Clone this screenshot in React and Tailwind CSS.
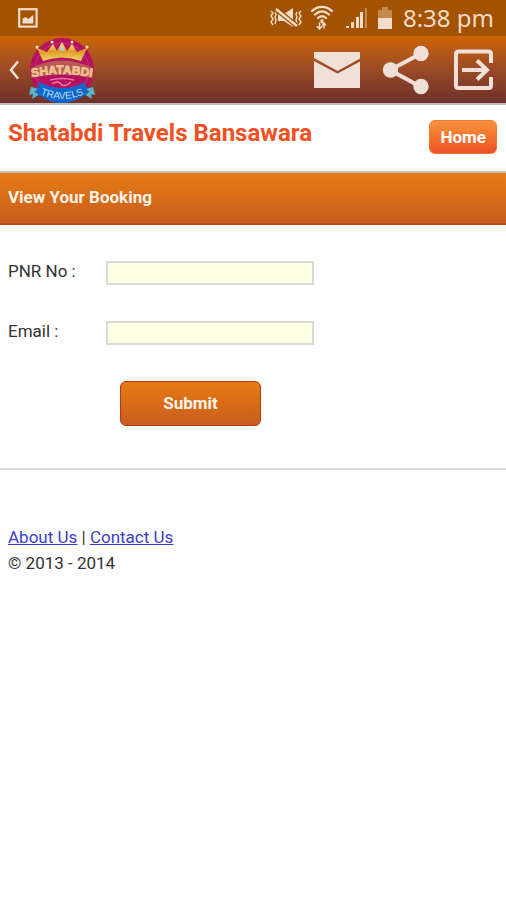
import { useState } from "react";

const FIELDS = [
    { id: "pnr", label: "PNR No :", type: "text" },
    { id: "email", label: "Email :", type: "email" },
];

function StatusBar() {
    return (
        <div className="flex h-9 items-center justify-between bg-[#a35200] pl-[18px] pr-3 text-[#f3dccb]">
            <svg className="h-5 w-5" viewBox="0 0 20 20" fill="none">
                <rect x="1.2" y="1.2" width="17.4" height="17.4" stroke="currentColor" strokeWidth="2.2" />
                <path d="M4.5 15.5v-5l3-1.6 3 2.2 4.8-4.3v8.7z" fill="currentColor" />
            </svg>

            <div className="flex items-center">
                {/* Vibrate / muted */}
                <svg className="mr-2 h-[22px] w-[34px]" viewBox="0 0 34 22" fill="none" stroke="currentColor">
                    <path d="M2 4l2 2-2 3 2 3-2 3 2 3M6 5l1 2-1 3 1 3-1 4M32 4l-2 2 2 3-2 3 2 3-2 3M28 5l-1 2 1 3-1 3 1 4" strokeWidth="1.4" />
                    <path d="M9 7h6l9-6v19l-9-6H9z" fill="currentColor" stroke="none" />
                    <path d="M7 2l21 17" stroke="#a35200" strokeWidth="5" />
                    <path d="M7 2l21 17" strokeWidth="2.4" />
                </svg>
                {/* Wifi */}
                <svg className="mr-3 h-[26px] w-[22px]" viewBox="0 0 22 26" fill="none" stroke="currentColor" strokeLinecap="round">
                    <path d="M1 6c6-5.5 14-5.5 20 0M4 9.5c4.500-4 9.500-4 14 0M7 13c2.600-2.300 5.400-2.300 8 0" strokeWidth="2.3" />
                    <path d="M11 15.500v1.500" strokeWidth="3" />
                    <path d="M8.500 18v6M6.200 21.500l2.300 2.700 2.200-2.700M13 23v-4M11.500 20l1.500-2 1.500 2" strokeWidth="1.5" />
                </svg>
                {/* Signal */}
                <svg className="mr-2 h-[22px] w-6" viewBox="0 0 24 22" fill="currentColor">
                    <path d="M1 19h3v2H1zM6 15h3v6H6zM11 10h3v11h-3zM15 5h3v16h-3z" />
                    <path d="M20 1h2v20h-2z" opacity="0.4" />
                </svg>
                {/* Battery */}
                <svg className="mr-2.5 h-[22px] w-4" viewBox="0 0 16 22" fill="currentColor">
                    <path d="M5 0h6v3h4v9H1V3h4z" opacity="0.4" />
                    <path d="M1 11h14v11H1z" />
                </svg>
                <span className="font-['Noto_Sans',sans-serif] text-2xl leading-9">8:38 pm</span>
            </div>
        </div>
    );
}

function Logo() {
    return (
        <svg className="h-[67px] w-[68px]" viewBox="0 0 68 67" role="img" aria-label="Shatabdi Travels">
            <defs>
                <linearGradient id="gold" x1="0" x2="0" y1="0" y2="1">
                    <stop offset="0" stopColor="#fff0a0" />
                    <stop offset="0.5" stopColor="#dd9c22" />
                    <stop offset="1" stopColor="#f5d668" />
                </linearGradient>
                <path id="nameLine" d="M1 42Q34 34 67 42" />
                <path id="ribbonLine" d="M9 57Q34 69 59 57" />
            </defs>
            <circle cx="34" cy="34" r="32" fill="#b5125f" />
            <circle cx="34" cy="34" r="27" fill="none" stroke="#d83a80" strokeWidth="1" opacity="0.7" />
            <path d="M9 12l10 4 6-8 4 7 5-9 5 9 5-7 5 8 10-4-6 13Q34 18 15 25z" fill="url(#gold)" />
            <g fill="#ffe9a2">
                <circle cx="9" cy="11" r="1.5" />
                <circle cx="24" cy="6" r="1.5" />
                <circle cx="44" cy="6" r="1.5" />
                <circle cx="59" cy="11" r="1.5" />
            </g>
            <circle cx="34" cy="13" r="2" fill="#a9d5dd" />
            <path d="M3 32Q34 17 65 32v10Q34 35 3 42z" fill="#b95a55" />
            <text className="font-['Liberation_Sans',sans-serif] text-[12px] font-bold" fill="#eab964" stroke="#ffe0c0" strokeWidth="0.5">
                <textPath href="#nameLine" startOffset="50%" textAnchor="middle">SHATABDI</textPath>
            </text>
            <path d="M22 44q12-3 24 0M24 48q6-4 9 0t10-2" fill="none" stroke="#ee7ba9" strokeWidth="1.4" />
            <path d="M3 51l8 2-5 3 6 2-8 5 1-5-4 1zM65 51l-8 2 5 3-6 2 8 5-1-5 4 1z" fill="#54b8ce" />
            <path d="M11 46Q34 58 57 46l3 11Q34 77 8 57z" fill="#1267cc" />
            <text className="font-['Liberation_Sans',sans-serif] text-[10px]" fill="#b4dcff">
                <textPath href="#ribbonLine" startOffset="50%" textAnchor="middle">TRAVELS</textPath>
            </text>
        </svg>
    );
}

function AppBar() {
    return (
        <header className="flex h-[67px] items-center justify-between bg-gradient-to-b from-[#cc6500] to-[#6d302b] pl-2 pr-3 text-[#f0e1d8]">
            <div className="flex items-center gap-2">
                <button type="button" aria-label="Back" className="flex h-12 w-3 items-center justify-center">
                    <svg className="h-5 w-3" viewBox="0 0 12 20" fill="none" stroke="currentColor" strokeWidth="2.5">
                        <path d="M10 1.500L3 10l7 8.500" />
                    </svg>
                </button>
                <Logo />
            </div>

            <nav className="flex items-center gap-[22px]">
                <button type="button" aria-label="Mail">
                    <svg className="h-[50px] w-12" viewBox="0 0 48 50" fill="currentColor">
                        <path d="M2 7h47v6L25.500 26 2 13z" />
                        <path d="M2 16l23.500 12.500L49 16v27H2z" />
                    </svg>
                </button>
                <button type="button" aria-label="Share">
                    <svg className="h-[50px] w-12" viewBox="0 0 48 50" fill="currentColor">
                        <path d="M39 8.500L8 25l31 17" fill="none" stroke="currentColor" strokeWidth="4" />
                        <circle cx="39" cy="8.500" r="7.700" />
                        <circle cx="8.500" cy="25" r="7.700" />
                        <circle cx="39" cy="41.500" r="7.700" />
                    </svg>
                </button>
                <button type="button" aria-label="Exit">
                    <svg className="h-[50px] w-[42px]" viewBox="0 0 42 50" fill="none" stroke="currentColor">
                        <path d="M39 18V9q0-2.500-2.500-2.500H6.500Q4 6.500 4 9v31.500q0 2.500 2.500 2.500h30q2.500 0 2.500-2.500V32" strokeWidth="4" />
                        <path d="M10 25h25M25 15.500L35 25l-10 9.500" strokeWidth="4" />
                    </svg>
                </button>
            </nav>
        </header>
    );
}

export default function App() {
    const [values, setValues] = useState({ pnr: "", email: "" });

    const handleChange = (e) => {
        setValues((prev) => ({ ...prev, [e.target.id]: e.target.value }));
    };

    return (
        <div className="min-h-screen bg-white font-[Roboto,sans-serif] text-[17px] text-[#333333]">
            <StatusBar />
            <AppBar />

            <main>
                {/* Agency name */}
                <div className="flex h-[70px] items-start justify-between border-y-2 border-t-[#c5bcbc] border-b-[#c9bdb5] pl-2 pr-[9px] pt-[15px]">
                    <h1 className="text-2xl leading-[26px] font-bold text-[#f15022]">Shatabdi Travels Bansawara</h1>
                    <a
                        href="#home"
                        className="rounded-md border border-[#ee7b35] bg-gradient-to-b from-[#f7913c] to-[#ee5123] px-2.5 leading-8 font-bold text-white"
                    >
                        Home
                    </a>
                </div>

                <h2 className="h-[52px] border-b-2 border-[#b74a12] bg-gradient-to-b from-[#e67c14] to-[#c95c1c] px-2 leading-[48px] font-bold text-[#fff3e6]">
                    View Your Booking
                </h2>

                {/* Booking lookup */}
                <form className="border-b-2 border-[#dedede] pt-9 pb-[42px]" onSubmit={(e) => e.preventDefault()}>
                    <div className="flex flex-col gap-9 pl-2">
                        {FIELDS.map((field) => (
                            <div key={field.id} className="flex items-start">
                                <label htmlFor={field.id} className="w-[98px] leading-5">{field.label}</label>
                                <input
                                    id={field.id}
                                    type={field.type}
                                    value={values[field.id]}
                                    onChange={handleChange}
                                    className="h-6 w-[208px] border-2 border-[#dadad6] bg-[#ffffe3] px-1 text-sm"
                                />
                            </div>
                        ))}
                    </div>
                    <button
                        type="submit"
                        className="mt-9 ml-[120px] block h-[45px] w-[141px] rounded-md border border-[#b5380f] bg-gradient-to-b from-[#e67a12] to-[#c95d1d] font-bold text-[#fff3e6]"
                    >
                        Submit
                    </button>
                </form>
            </main>

            <footer className="px-2 pt-[54px] leading-[26px]">
                <p>
                    <a href="#about" className="text-[#3940c8] underline">About Us</a>
                    {" | "}
                    <a href="#contact" className="text-[#3940c8] underline">Contact Us</a>
                </p>
                <p>© 2013 - 2014</p>
            </footer>
        </div>
    );
}
